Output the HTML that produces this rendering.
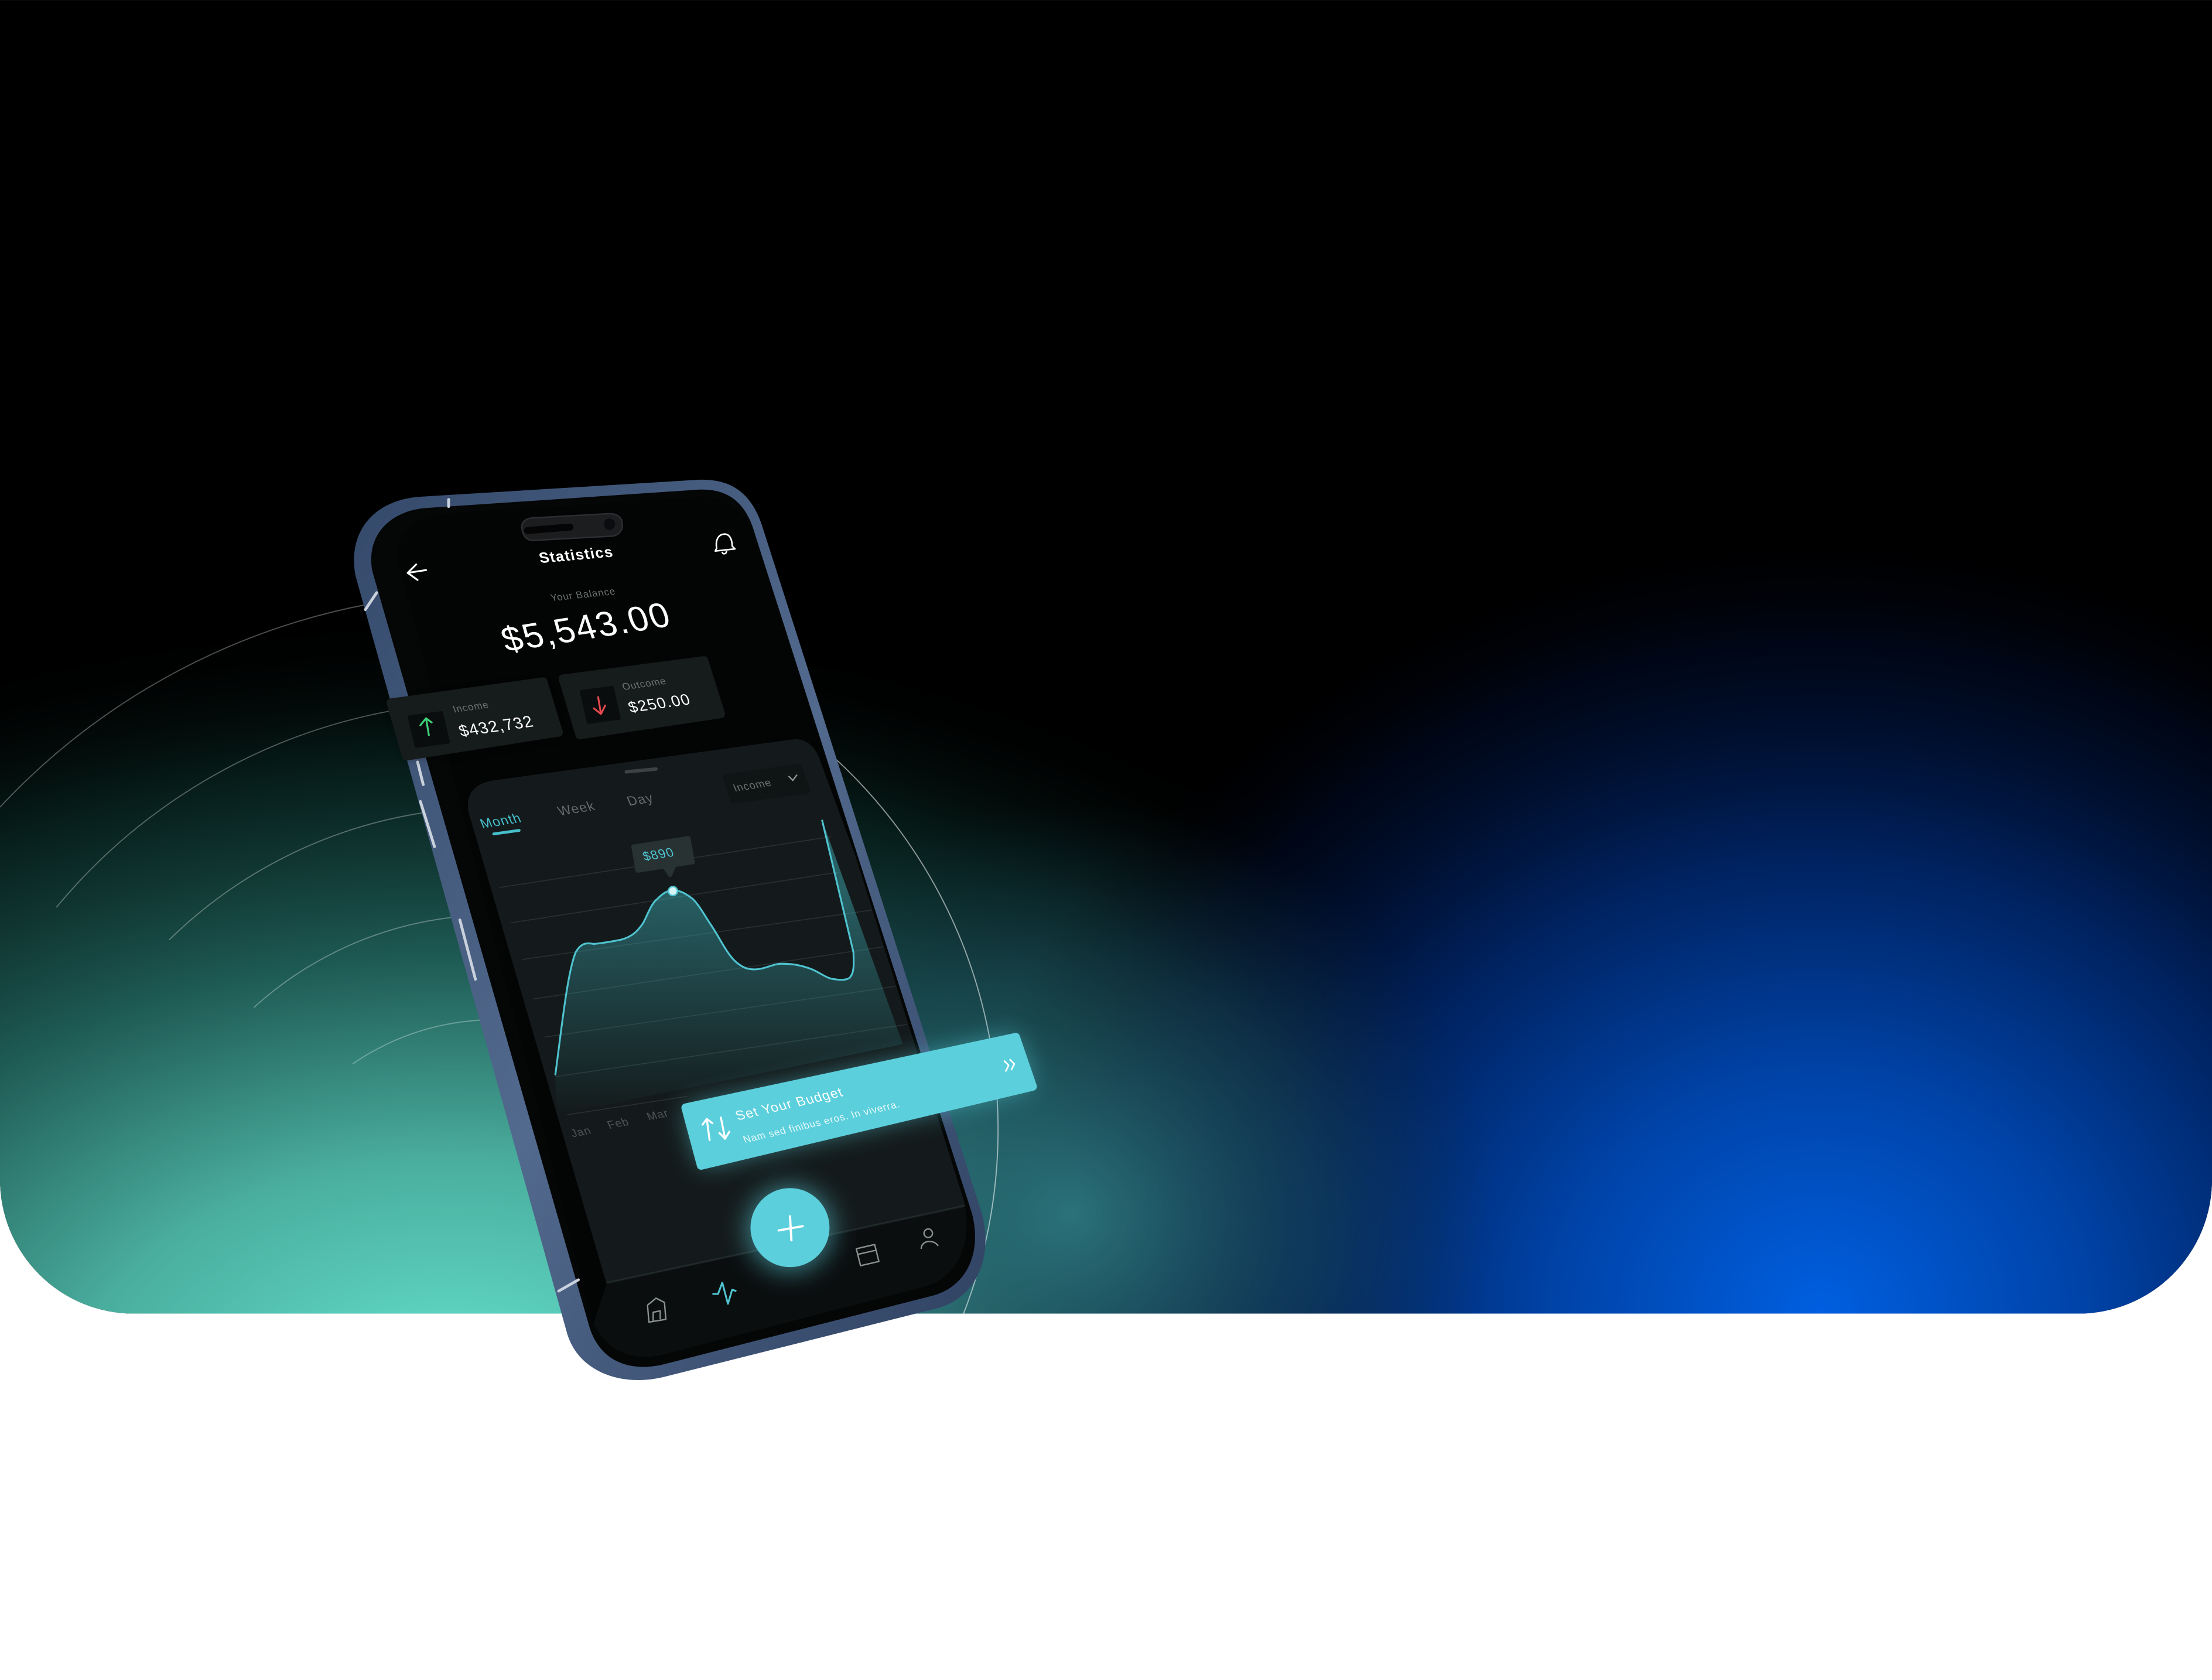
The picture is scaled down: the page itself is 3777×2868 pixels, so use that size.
<!DOCTYPE html>
<html><head><meta charset="utf-8"><style>
html,body{margin:0;padding:0;background:#fff;}
svg{display:block;}
text{font-family:"Liberation Sans",sans-serif;}
</style></head><body>
<svg width="3777" height="2868" viewBox="0 0 1568 1190.6" xmlns="http://www.w3.org/2000/svg">
<defs>
<clipPath id="panel"><path d="M0,0 H1568 V836 A95,95 0 0 1 1473,931 H95 A95,95 0 0 1 0,836 Z"/></clipPath>
<clipPath id="scr"><path d="M283,400 C278,378 295,366 315,364 L495,352 C515,351 528,362 535,380 L683,850 C690,880 680,905 655,912 L470,960 C445,966 425,955 418,930 Z"/></clipPath>
<radialGradient id="teal" gradientUnits="userSpaceOnUse" cx="0" cy="0" r="1" gradientTransform="translate(320,990) scale(880,560)">
<stop offset="0" stop-color="#66e3cf"/><stop offset="0.3" stop-color="#4aae9e"/><stop offset="0.55" stop-color="#1f5c56"/><stop offset="0.8" stop-color="#082420" stop-opacity="0.8"/><stop offset="1" stop-color="#000" stop-opacity="0"/></radialGradient>
<radialGradient id="blue" gradientUnits="userSpaceOnUse" cx="0" cy="0" r="1" gradientTransform="translate(1290,930) scale(620,560)">
<stop offset="0" stop-color="#005fe0"/><stop offset="0.3" stop-color="#0043a8"/><stop offset="0.6" stop-color="#001f58"/><stop offset="0.85" stop-color="#000a24" stop-opacity="0.6"/><stop offset="1" stop-color="#000" stop-opacity="0"/></radialGradient>
<radialGradient id="mid" gradientUnits="userSpaceOnUse" cx="0" cy="0" r="1" gradientTransform="translate(760,860) scale(300,290)">
<stop offset="0" stop-color="#2e7a82" stop-opacity="0.9"/><stop offset="0.6" stop-color="#1a4a5a" stop-opacity="0.5"/><stop offset="1" stop-color="#0d2a40" stop-opacity="0"/></radialGradient>
<linearGradient id="area" x1="0" y1="630" x2="0" y2="790" gradientUnits="userSpaceOnUse">
<stop offset="0" stop-color="#3fb5bd" stop-opacity="0.45"/><stop offset="1" stop-color="#3fb5bd" stop-opacity="0"/></linearGradient>
<linearGradient id="frame" x1="0" y1="0" x2="1" y2="1">
<stop offset="0" stop-color="#34496a"/><stop offset="0.5" stop-color="#526a8e"/><stop offset="1" stop-color="#2e4060"/></linearGradient>
<filter id="glow" x="-50%" y="-50%" width="200%" height="200%"><feGaussianBlur stdDeviation="9"/></filter>
<filter id="sh" x="-30%" y="-30%" width="160%" height="160%"><feGaussianBlur stdDeviation="4"/></filter>
</defs>

<g clip-path="url(#panel)">
<rect width="1568" height="931" fill="#000"/>
<rect width="1568" height="931" fill="url(#teal)"/>
<rect width="1568" height="931" fill="url(#blue)"/>
<rect width="1568" height="931" fill="url(#mid)"/>
<g fill="none" stroke="#ffffff" stroke-opacity="0.3" stroke-width="0.8">
<path d="M0,572 A480,480 0 0 1 262,428"/>
<path d="M40,643 A403,403 0 0 1 276,504"/>
<path d="M120,666 A328,328 0 0 1 300,576"/>
<path d="M180,714 A252,252 0 0 1 322,650"/>
<path d="M250,754 A177,177 0 0 1 340,723"/>
<path d="M580,527 A358,358 0 0 1 683,931" stroke-opacity="0.55"/>
</g>
</g>

<!-- phone frame -->
<path d="M252,408 C246,376 266,354 298,352 L495,340 C521,339 534,352 541,375 L696,860 C704,890 693,919 665,927 L470,976 C440,983 410,972 402,945 Z" fill="url(#frame)"/>
<path d="M264,405 C259,380 276,362 302,360 L495,347 C517,346 529,357 535,378 L689,860 C696,887 686,911 662,918 L470,967 C444,973 425,963 418,941 Z" fill="#050606"/>
<g stroke="#c9d1dc" stroke-width="2" stroke-linecap="round">
<path d="M259,432 L267,420"/><path d="M296,540 L300,556"/><path d="M298,568 L308,600"/><path d="M326,652 L337,694"/>
<path d="M396,915 L410,907"/><path d="M318,354 L318,359"/>
</g>
<g clip-path="url(#scr)">
<rect x="250" y="330" width="460" height="660" fill="#030404"/>
<path d="M332,575 C330,562 337,555 350,553 L562,524 C572,523 578,530 581,538 L700,860 L430,910 Z" fill="#141a1b"/>
<path d="M430,910 L700,852 L720,1000 L400,1000 Z" fill="#0b0e0f"/>
<path d="M430,909 L690,853" stroke="#222a2b" stroke-width="1"/>
<g stroke="#273031" stroke-width="0.7">
<path d="M354,629 L589,593"/><path d="M362,654 L595,618"/><path d="M370,680 L618,645"/><path d="M378,708 L626,671"/><path d="M386,735 L635,699"/><path d="M394,763 L643,726"/><path d="M402,790 L487,777"/>
</g>
<path d="M393.6,762 C398,730 402,690 408,675 C412,668 416,668 421,669 C430,668 435,667 440,666 C448,664 452,660 456,654 C460,646 462,640 466,637 C470,633 473,631 477,631 C483,631 487,634 491,637 C496,642 499,648 503,654 C510,664 515,676 522,682 C527,686 530,687 535,687 C542,687 548,683 554,683 C562,683 567,684 573,686 C580,688 586,694 592,694 C598,695 602,694 603,692 C606,688 605,680 605,675 L582.7,581 L640,740 L395,790 Z" fill="url(#area)"/>
<path d="M393.6,762 C398,730 402,690 408,675 C412,668 416,668 421,669 C430,668 435,667 440,666 C448,664 452,660 456,654 C460,646 462,640 466,637 C470,633 473,631 477,631 C483,631 487,634 491,637 C496,642 499,648 503,654 C510,664 515,676 522,682 C527,686 530,687 535,687 C542,687 548,683 554,683 C562,683 567,684 573,686 C580,688 586,694 592,694 C598,695 602,694 603,692 C606,688 605,680 605,675 L582.7,581" fill="none" stroke="#4fc3cf" stroke-width="1.3"/>
<circle cx="477" cy="631.5" r="3.2" fill="#d6f3f5" stroke="#4fc3cf" stroke-width="1"/>
<path d="M449,600 L488,594 L491,611 L478,613 L475,620 L471,614 L452,617 Z" fill="#283233" stroke="#283233" stroke-width="3" stroke-linejoin="round"/>
<text transform="translate(457,610) rotate(-9) skewX(12)" font-size="9" fill="#4fc3cf" letter-spacing="0.5">$890</text>
<path d="M444,547 L465,545" stroke="#3a4243" stroke-width="2.5" stroke-linecap="round"/>
<text transform="translate(342,587) rotate(-9) skewX(14)" font-size="9.5" fill="#46c0cc" letter-spacing="0.5">Month</text>
<path d="M350,591 L368,588.5" stroke="#46c0cc" stroke-width="2" stroke-linecap="round"/>
<text transform="translate(397,578) rotate(-9) skewX(14)" font-size="9.5" fill="#626b6c" letter-spacing="0.5">Week</text>
<text transform="translate(446,571) rotate(-9) skewX(14)" font-size="9.5" fill="#626b6c" letter-spacing="0.5">Day</text>
<path d="M515,551 L566,544 L572,560 L520,567 Z" fill="#0f1414" stroke="#0f1414" stroke-width="5" stroke-linejoin="round"/>
<text transform="translate(521,561) rotate(-9) skewX(14)" font-size="7.5" fill="#6a7374" letter-spacing="0.4">Income</text>
<path d="M559,550 L562,553 L565,549" fill="none" stroke="#8a9292" stroke-width="1"/>
<g font-size="8" fill="#4b5455" letter-spacing="0.4">
<text transform="translate(406,806) rotate(-11) skewX(14)">Jan</text>
<text transform="translate(432,800) rotate(-11) skewX(14)">Feb</text>
<text transform="translate(460,794) rotate(-11) skewX(14)">Mar</text>
</g>
<path d="M370,375 C369,370 373,367 378,367 L432,364 C438,364 441,367 441,371 C442,376 438,380 433,380 L378,383 C373,383 371,380 370,375 Z" fill="#1b1d1f" stroke="#2c2f33" stroke-width="1"/>
<path d="M374,376 L404,373.5" stroke="#050505" stroke-width="5" stroke-linecap="round"/>
<circle cx="432" cy="371.5" r="4" fill="#0a0c10"/>
<text transform="translate(383,399) rotate(-5) skewX(8)" font-size="10.5" font-weight="bold" fill="#fff" letter-spacing="0.6">Statistics</text>
<path d="M302,404 L289,406 M295,400 L289,406 L296,411" fill="none" stroke="#fff" stroke-width="1.3" stroke-linecap="round" stroke-linejoin="round"/>
<path d="M508,388.5 C507,383 509,379 513,378.5 C517,378 519,382 519,387 L521,389 L507,390.5 Z M512,391 C512,393 515,393 515,390.5" fill="none" stroke="#fff" stroke-width="1.1" stroke-linejoin="round"/>
<text transform="translate(391,426) rotate(-6) skewX(10)" font-size="7" fill="#6c7373" letter-spacing="0.4">Your Balance</text>
<text transform="translate(359,462) rotate(-9) skewX(10)" font-size="25" fill="#fff" letter-spacing="1">$5,543.00</text>
<path d="M399,481 L499,468 L511,506 L411,521 Z" fill="#161b1c" stroke="#161b1c" stroke-width="6" stroke-linejoin="round"/>
<path d="M412,490 L434,487 L439,509 L417,512 Z" fill="#0a0d0e" stroke="#0a0d0e" stroke-width="2" stroke-linejoin="round"/>
<path d="M424,494 L426,506 M421,502 L426,506 L429,500" fill="none" stroke="#e5484d" stroke-width="1.3" stroke-linecap="round" stroke-linejoin="round"/>
<text transform="translate(442,489) rotate(-8) skewX(12)" font-size="7" fill="#6c7373" letter-spacing="0.4">Outcome</text>
<text transform="translate(447,505) rotate(-8) skewX(12)" font-size="11" fill="#fff" letter-spacing="0.6">$250.00</text>
<path d="M459,925 L465,920 L471,923 L472,935 L460,937 Z M463,936 L463,930 L468,929 L468,935" fill="none" stroke="#8a9091" stroke-width="1" stroke-linejoin="round"/>
<path d="M505,917 L509,917 L512,909 L516,924 L519,914 L522,915" fill="none" stroke="#4fc3cf" stroke-width="1.3" stroke-linejoin="round"/>
<path d="M607,885 L620,882 L623,894 L610,897 Z M608,889 L621,886" fill="none" stroke="#8a9091" stroke-width="1" stroke-linejoin="round"/>
<circle cx="658" cy="874" r="3" fill="none" stroke="#8a9091" stroke-width="1"/>
<path d="M653,885 C653,879 662,878 665,883" fill="none" stroke="#8a9091" stroke-width="1"/>
</g>

<path d="M278,500 L384,485 L395,520 L290,537 Z" fill="#000" opacity="0.5" filter="url(#sh)"/>
<path d="M277,498 L385,483 L396,519 L288,536 Z" fill="#161b1c" stroke="#161b1c" stroke-width="6" stroke-linejoin="round"/>
<path d="M290,508 L313,505 L318,526 L295,529 Z" fill="#0a0d0e" stroke="#0a0d0e" stroke-width="2" stroke-linejoin="round"/>
<path d="M304,521 L302,509 M298,514 L302,509 L306,512" fill="none" stroke="#3fd27a" stroke-width="1.3" stroke-linecap="round" stroke-linejoin="round"/>
<text transform="translate(322,505) rotate(-8) skewX(12)" font-size="7" fill="#6c7373" letter-spacing="0.4">Income</text>
<text transform="translate(327,522) rotate(-8) skewX(12)" font-size="11.5" fill="#fff" letter-spacing="0.6">$432,732</text>

<path d="M486,785 L720,735 L732,770 L497,826 Z" fill="#5ccfdc" opacity="0.6" filter="url(#glow)"/>
<path d="M486,785 L720,735 L732,770 L497,826 Z" fill="#5ccfdc" stroke="#5ccfdc" stroke-width="6" stroke-linejoin="round"/>
<text transform="translate(523,794) rotate(-13) skewX(10)" font-size="9.5" fill="#fff" letter-spacing="0.6">Set Your Budget</text>
<text transform="translate(528,810) rotate(-13) skewX(10)" font-size="7" fill="#eafafc" letter-spacing="0.4">Nam sed finibus eros. In viverra.</text>
<path d="M503,808 L501,793 M498,797 L501,793 L505,796 M511,792 L514,807 M510,803 L514,807 L517,802" fill="none" stroke="#fff" stroke-width="1.4" stroke-linecap="round" stroke-linejoin="round"/>
<path d="M712,752 L715,755 L713,759 M716,751 L719,754 L717,758" fill="none" stroke="#fff" stroke-width="1.1" stroke-linecap="round" stroke-linejoin="round"/>

<circle cx="560" cy="871" r="30" fill="#5ccfdc" opacity="0.6" filter="url(#glow)"/>
<circle cx="560" cy="870" r="28" fill="#5ccfdc"/>
<path d="M552,872 L569,869 M560,862 L561,879" stroke="#fff" stroke-width="1.6" stroke-linecap="round"/>
</svg>
</body></html>
